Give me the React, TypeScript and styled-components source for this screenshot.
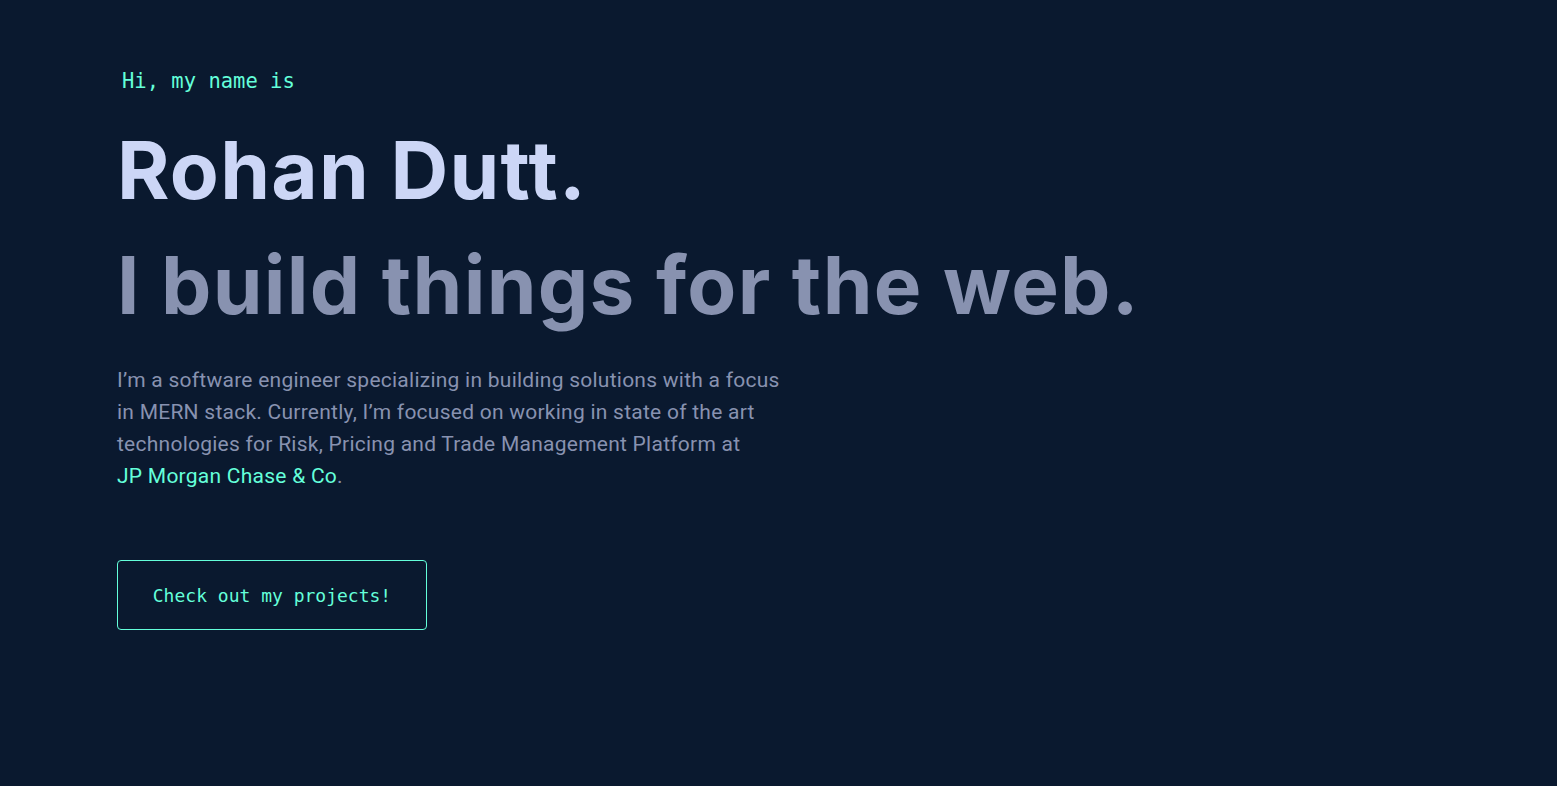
import styled, { createGlobalStyle } from "styled-components";

const GlobalStyle = createGlobalStyle`
  html, body {
    margin: 0;
    padding: 0;
    background-color: #0a192f;
  }
  * {
    box-sizing: border-box;
  }
`;

const Hero = () => {
  return (
    <Section>
      <Greeting>Hi, my name is</Greeting>
      <BigHeading>Rohan Dutt.</BigHeading>
      <BigHeading $muted>I build things for the web.</BigHeading>
      <Intro>
        I’m a software engineer specializing in building solutions with a focus
        <br />
        in MERN stack. Currently, I’m focused on working in state of the art
        <br />
        technologies for Risk, Pricing and Trade Management Platform at
        <br />
        <Highlight>JP Morgan Chase &amp; Co</Highlight>.
      </Intro>
      <ProjectsButton>Check out my projects!</ProjectsButton>
    </Section>
  );
};

const App = () => (
  <>
    <GlobalStyle />
    <Hero />
  </>
);

const Section = styled.section`
  min-height: 786px;
  display: flex;
  flex-direction: column;
  align-items: flex-start;
  padding: 71px 117px 0;
  background-color: #0a192f;
`;

const Greeting = styled.h1`
  margin: 0 0 35px 5px;
  font-family: "DejaVu Sans Mono", "Liberation Mono", monospace;
  font-size: 20.5px;
  font-weight: 400;
  line-height: 20px;
  color: #64ffda;
`;

const BigHeading = styled.h2<{ $muted?: boolean }>`
  margin: 0 0 ${(p) => (p.$muted ? "35px" : "27px")} 0;
  font-family: Inter, "Open Sans", sans-serif;
  font-size: 80px;
  font-weight: 700;
  letter-spacing: 1.3px;
  line-height: 88px;
  color: ${(p) => (p.$muted ? "#8892b0" : "#ccd6f6")};
`;

const Intro = styled.p`
  margin: 0 0 68px 0;
  font-family: Roboto, "Liberation Sans", sans-serif;
  font-size: 21px;
  letter-spacing: 0.25px;
  line-height: 32px;
  color: #8892b0;
`;

const Highlight = styled.span`
  color: #64ffda;
`;

const ProjectsButton = styled.a`
  display: flex;
  align-items: center;
  justify-content: center;
  width: 310px;
  height: 70px;
  border: 1px solid #64ffda;
  border-radius: 4px;
  font-family: "DejaVu Sans Mono", "Liberation Mono", monospace;
  font-size: 18px;
  color: #64ffda;
  cursor: pointer;
`;

export default App;
